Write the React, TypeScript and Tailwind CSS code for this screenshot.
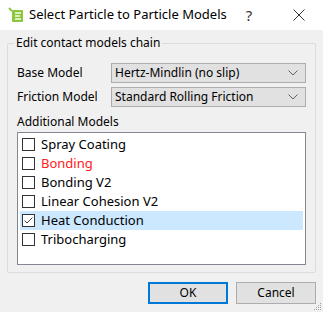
import { useState } from 'react';

const models = [
  { name: 'Spray Coating', checked: false },
  { name: 'Bonding', checked: false, red: true },
  { name: 'Bonding V2', checked: false },
  { name: 'Linear Cohesion V2', checked: false },
  { name: 'Heat Conduction', checked: true, selected: true },
  { name: 'Tribocharging', checked: false },
];

const Chevron = () => (
  <svg width="10" height="6" viewBox="0 0 10 6" className="mr-[7px]">
    <path d="M0.5 0.5 L5 5 L9.5 0.5" fill="none" stroke="#606060" strokeWidth="1" />
  </svg>
);

const Combo = ({ value }: { value: string }) => (
  <div className="flex h-[20px] flex-1 items-center justify-between border border-[#adadad] bg-[#e1e1e1] pl-[3px]">
    <span>{value}</span>
    <Chevron />
  </div>
);

const AppIcon = () => (
  <svg width="16" height="16" viewBox="0 0 16 16">
    <rect x="4" y="3" width="11" height="12" rx="1" fill="#8cc63f" />
    <rect x="7" y="5" width="6" height="2" fill="#d9f0b8" />
    <rect x="7" y="8" width="5" height="2" fill="#d9f0b8" />
    <rect x="7" y="11" width="6" height="2" fill="#d9f0b8" />
    <path d="M1 1 L4 4" stroke="#8cc63f" strokeWidth="2" />
  </svg>
);

const Grip = () => (
  <svg width="8" height="8" viewBox="0 0 8 8" className="absolute bottom-[1px] right-[1px]">
    {[
      [6, 0],
      [4, 2],
      [6, 2],
      [2, 4],
      [4, 4],
      [6, 4],
      [0, 6],
      [2, 6],
      [4, 6],
      [6, 6],
    ].map(([x, y]) => (
      <rect key={`${x}-${y}`} x={x} y={y} width="1" height="1" fill="#a0a0a0" />
    ))}
  </svg>
);

export default function App() {
  const [items, setItems] = useState(models);

  return (
    <div className="relative h-[312px] w-[323px] bg-[#f0f0f0] text-[12px] text-[#000] font-['Noto_Sans',sans-serif]">
      <div className="flex h-[30px] items-center bg-white pl-[8px]">
        <AppIcon />
        <span className="ml-[5px] min-w-0 flex-1 whitespace-nowrap text-[13px] text-[#000]">
          Select Particle to Particle Models
        </span>
        <span className="w-[50px] text-center text-[15px] text-[#333]">?</span>
        <div className="flex w-[49px] items-center justify-center">
          <svg width="12" height="12" viewBox="0 0 12 12">
            <path d="M0.5 0.5 L11.5 11.5 M11.5 0.5 L0.5 11.5" stroke="#333" strokeWidth="1" />
          </svg>
        </div>
      </div>

      <div className="px-[7px] pt-[13px]">
        <div className="relative h-[230px] rounded-[2px] border border-[#dcdcdc] px-[9px] pt-[19px]">
          <span className="absolute left-[6px] top-[-10px] bg-[#f0f0f0] px-[2px]">Edit contact models chain</span>
          <div className="flex items-center">
            <span className="w-[94px]">Base Model</span>
            <Combo value="Hertz-Mindlin (no slip)" />
          </div>
          <div className="mt-[4px] flex items-center">
            <span className="w-[94px]">Friction Model</span>
            <Combo value="Standard Rolling Friction" />
          </div>
          <div className="mt-[4px] h-[21px] leading-[21px]">Additional Models</div>
          <div className="h-[133px] border border-[#828790] bg-white p-[2px] text-[13px]">
            {items.map((m, i) => (
              <div
                key={m.name}
                onClick={() =>
                  setItems(items.map((x, j) => (j === i ? { ...x, checked: !x.checked } : x)))
                }
                className={`flex h-[19px] items-center pl-[2px] ${m.selected ? 'bg-[#cce8ff]' : ''}`}
              >
                <div className="flex h-[13px] w-[13px] items-center justify-center border border-[#333] bg-white">
                  {m.checked && (
                    <svg width="11" height="11" viewBox="0 0 11 11">
                      <path d="M1.5 5.5 L4 8 L9.5 2.5" fill="none" stroke="#444" strokeWidth="1" />
                    </svg>
                  )}
                </div>
                <span className={`ml-[6px] ${m.red ? 'text-[#ff2020]' : 'text-[#000]'}`}>{m.name}</span>
              </div>
            ))}
          </div>
        </div>
      </div>

      <div className="mt-[9px] flex justify-end gap-[8px] pr-[7px]">
        <button className="h-[22px] w-[80px] border-2 border-[#0078d7] bg-[#e1e1e1] text-[12px]">OK</button>
        <button className="h-[22px] w-[80px] border border-[#adadad] bg-[#e1e1e1] text-[12px]">Cancel</button>
      </div>
      <Grip />
    </div>
  );
}
